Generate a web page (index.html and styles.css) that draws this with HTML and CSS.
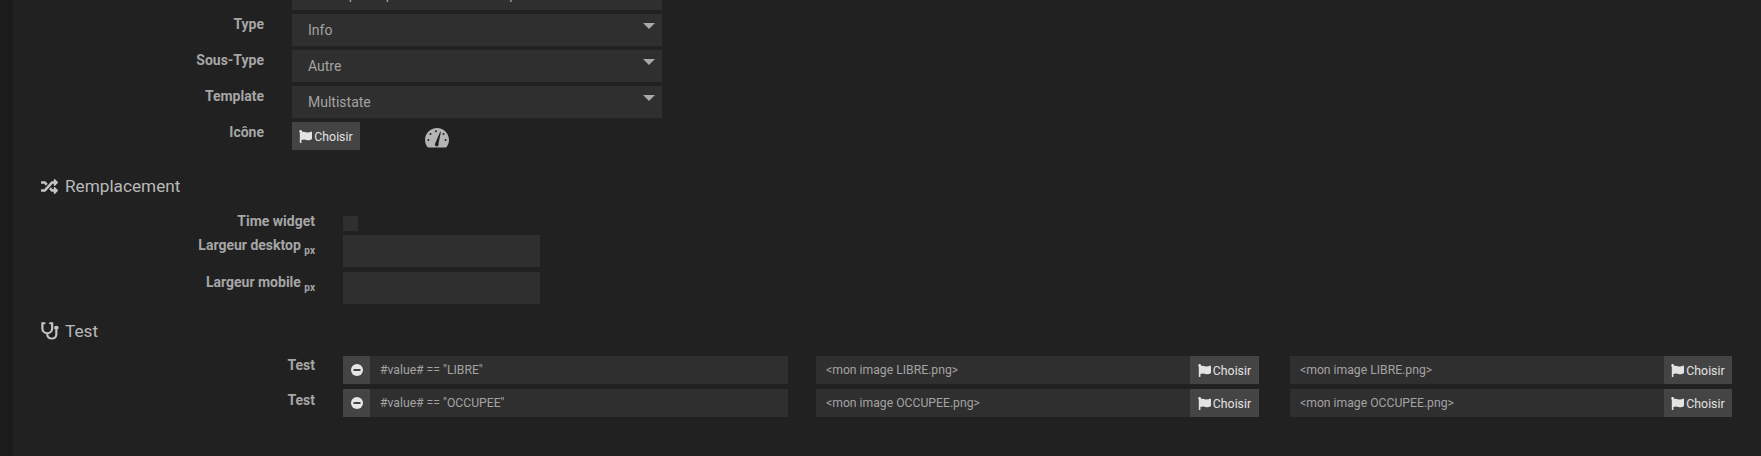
FILE: index.html
```html
<!DOCTYPE html>
<html lang="fr">
<head>
<meta charset="utf-8">
<title>Configuration</title>
<link rel="stylesheet" href="styles.css">
</head>
<body>
<div class="sidebar"></div>
<main class="page">
  <svg class="defs" width="0" height="0" aria-hidden="true">
    <symbol id="flag" viewBox="0 0 512 512"><path fill="currentColor" d="M349.565 98.783C295.978 98.783 251.721 64 184.348 64c-24.955 0-47.309 4.384-68.045 12.013a55.947 55.947 0 0 0 3.586-23.562C118.117 24.015 94.806 1.206 66.338.048 34.345-1.254 8 24.296 8 56c0 19.026 9.497 35.825 24 45.945V488c0 13.255 10.745 24 24 24h16c13.255 0 24-10.745 24-24v-94.4c28.311-12.064 63.582-22.122 114.435-22.122 53.588 0 97.844 34.783 165.217 34.783 48.169 0 86.667-16.294 122.505-40.858C506.84 359.452 512 349.571 512 339.045v-243.1c0-23.393-24.269-38.87-45.485-29.016-34.338 15.948-76.454 31.854-116.95 31.854z"/></symbol>
  </svg>

  <section class="form form-top">
    <div class="row"><span class="label"></span><div class="select clipped">Statut pièce pour les 2 salles du premier</div></div>
    <div class="row"><label class="label">Type</label><div class="select">Info</div></div>
    <div class="row"><label class="label">Sous-Type</label><div class="select">Autre</div></div>
    <div class="row"><label class="label">Template</label><div class="select">Multistate</div></div>
    <div class="row row-icon">
      <label class="label">Icône</label>
      <button class="btn"><svg class="flag"><use href="#flag"/></svg>Choisir</button>
      <svg class="gauge" viewBox="0 0 24 20"><path fill="#b4b4b4" fill-rule="evenodd" d="M12 0C5.400 0 0 5.200 0 11.800c0 2.700.9 5.300 2.500 7.200.3.400.7.600 1.200.600h16.600c.5 0 .9-.2 1.200-.6 1.600-1.900 2.500-4.500 2.500-7.200C24 5.200 18.600 0 12 0zM10 15.800l5.200-12 .7.300-2.400 11.700a1.900 1.900 0 1 1-3.500 0zM3.400 12.900a1 1 0 1 1 0-2 1 1 0 0 1 0 2zm2.100-5.800a1 1 0 1 1 0-2 1 1 0 0 1 0 2zM11 4.200a1 1 0 1 1 0-2 1 1 0 0 1 0 2zm9.600 8.700a1 1 0 1 1 0-2 1 1 0 0 1 0 2zm-2.100-5.800a1 1 0 1 1 0-2 1 1 0 0 1 0 2z"/></svg>
    </div>
  </section>

  <h3 class="heading heading-replace">
    <svg class="hicon" viewBox="0 0 512 512"><path fill="currentColor" d="M504.971 359.029c9.373 9.373 9.373 24.569 0 33.941l-80 79.984c-15.01 15.01-40.971 4.49-40.971-16.971V416h-58.785a12.004 12.004 0 0 1-8.773-3.812l-70.556-75.596 53.333-57.143L352 336h32v-39.981c0-21.438 25.943-31.998 40.971-16.971l80 79.981zM12 176h84l52.781 56.551 53.333-57.143-70.556-75.596A11.999 11.999 0 0 0 122.785 96H12c-6.627 0-12 5.373-12 12v56c0 6.627 5.373 12 12 12zm372 0v39.984c0 21.46 25.961 31.98 40.971 16.971l80-79.984c9.373-9.373 9.373-24.569 0-33.941l-80-79.981C409.943 24.021 384 34.582 384 56.019V96h-58.785a12.004 12.004 0 0 0-8.773 3.812L96 336H12c-6.627 0-12 5.373-12 12v56c0 6.627 5.373 12 12 12h110.785c3.326 0 6.503-1.381 8.773-3.812L352 176h32z"/></svg>
    Remplacement
  </h3>

  <section class="form form-size">
    <div class="row row-check"><label class="label">Time widget</label><span class="checkbox"></span></div>
    <div class="row"><label class="label">Largeur desktop <sub>px</sub></label><div class="input"></div></div>
    <div class="row"><label class="label">Largeur mobile <sub>px</sub></label><div class="input"></div></div>
  </section>

  <h3 class="heading heading-test">
    <svg class="hicon hicon-steth" viewBox="1 0 15.500 18" preserveAspectRatio="none"><path fill="none" stroke="currentColor" stroke-width="1.900" stroke-linecap="round" d="M4 1.300H2.200v5.200c0 2.700 1.900 4.700 4.200 4.700s4.200-2 4.200-4.700V1.300H8.800M6.400 11.200v1.400c0 2.300 1.700 4 3.900 4s3.900-1.700 3.900-4V8"/><circle cx="14.200" cy="5.800" r="2" fill="currentColor"/></svg>
    Test
  </h3>

  <section class="tests">
    <div class="test-row">
      <label class="label">Test</label>
      <div class="group group-cond"><span class="addon"><svg class="minus" viewBox="0 0 14 14"><circle cx="7" cy="7" r="6" fill="#e6e6e6"/><rect x="3.500" y="6" width="7" height="2" fill="#444"/></svg></span><span class="field">#value# == "LIBRE"</span></div>
      <div class="group group-mid"><span class="field">&lt;mon image LIBRE.png&gt;</span><button class="btn btn-addon"><svg class="flag"><use href="#flag"/></svg>Choisir</button></div>
      <div class="group group-end"><span class="field">&lt;mon image LIBRE.png&gt;</span><button class="btn btn-addon"><svg class="flag"><use href="#flag"/></svg>Choisir</button></div>
    </div>
    <div class="test-row test-row-low">
      <label class="label">Test</label>
      <div class="group group-cond"><span class="addon"><svg class="minus" viewBox="0 0 14 14"><circle cx="7" cy="7" r="6" fill="#e6e6e6"/><rect x="3.500" y="6" width="7" height="2" fill="#444"/></svg></span><span class="field">#value# == "OCCUPEE"</span></div>
      <div class="group group-mid"><span class="field">&lt;mon image OCCUPEE.png&gt;</span><button class="btn btn-addon"><svg class="flag"><use href="#flag"/></svg>Choisir</button></div>
      <div class="group group-end"><span class="field">&lt;mon image OCCUPEE.png&gt;</span><button class="btn btn-addon"><svg class="flag"><use href="#flag"/></svg>Choisir</button></div>
    </div>
  </section>
</main>
</body>
</html>
```
FILE: styles.css
```css
* { box-sizing: border-box; }
html, body { margin: 0; height: 456px; overflow: hidden; }
body {
  display: flex;
  background: #212121;
  color: #a9a9a9;
  font-family: Roboto, "Liberation Sans", sans-serif;
  font-size: 14px;
}
.sidebar { width: 13px; flex: none; background: #1b1b1b; }
.page { flex: 1; min-width: 0; }
.defs { display: block; }

.form-top { margin-top: -22px; }
.row { display: grid; column-gap: 28px; margin-bottom: 4px; }
.form-top .row { grid-template-columns: 251px 370px; }
.form-size .row { grid-template-columns: 302px 197px; column-gap: 28px; margin-bottom: 5px; }

.label {
  display: block;
  text-align: right;
  font-weight: 700;
  color: #a6a6a6;
  padding-top: 1px;
  line-height: 18px;
  white-space: nowrap;
}
.label sub { font-size: 10px; line-height: 0; }

.select {
  position: relative;
  height: 32px;
  background: #2f2f2f;
  padding: 6px 0 0 16px;
  line-height: 20px;
  color: #a3a3a3;
}
.select::after {
  content: "";
  position: absolute;
  right: 7px;
  top: 9px;
  border-left: 6px solid transparent;
  border-right: 6px solid transparent;
  border-top: 6px solid #a9a9a9;
}
.select.clipped::after { display: none; }

.btn {
  display: flex;
  align-items: center;
  justify-content: center;
  width: 68px;
  height: 28px;
  padding: 1px 0 0;
  border: 0;
  background: #444;
  color: #e3e3e3;
  font: 400 12.3px Roboto, "Liberation Sans", sans-serif;
}
.flag { width: 13px; height: 13px; margin-right: 2px; color: #e3e3e3; }
.form-top .row-icon { grid-template-columns: 251px 68px 24px; }
.gauge { width: 24px; height: 20px; margin: 6px 0 0 37px; }

.heading {
  display: flex;
  align-items: center;
  margin: 0 0 0 28px;
  height: 24px;
  font-weight: 400;
  font-size: 17.2px;
  color: #b9b9b9;
}
.heading-replace { margin-top: 24px; }
.heading-test { margin-top: 15px; }
.hicon { width: 17px; height: 17px; margin-right: 7px; color: #c4c4c4; }
.hicon-steth { width: 18px; height: 18px; margin-right: 6px; }

.form-size { margin-top: 18px; }
.form-size .row-check { margin-bottom: 4px; height: 15px; }
.row-check .label { padding-top: 0; margin-top: -4px; }
.checkbox { width: 15px; height: 15px; background: #2f2f2f; }
.input { height: 32px; background: #2f2f2f; }

.tests { margin-top: 13px; }
.test-row {
  display: flex;
  height: 28px;
  margin-bottom: 5px;
}
.test-row .label { width: 302px; flex: none; padding-top: 0; }
.test-row-low .label { padding-top: 2px; }
.group { display: flex; height: 28px; background: #2f2f2f; color: #a3a3a3; font-size: 12.2px; line-height: 29px; }
.group-cond { width: 445px; margin-left: 28px; }
.group-mid { width: 443px; margin-left: 28px; }
.group-end { width: 442px; margin-left: 31px; }
.field { flex: 1; padding-left: 10px; white-space: nowrap; overflow: hidden; }
.addon { width: 27px; flex: none; display: flex; align-items: center; justify-content: center; background: #444; }
.minus { width: 14px; height: 14px; }
.btn-addon { flex: none; width: 69px; }
.group-end .btn-addon { width: 68px; }
```
